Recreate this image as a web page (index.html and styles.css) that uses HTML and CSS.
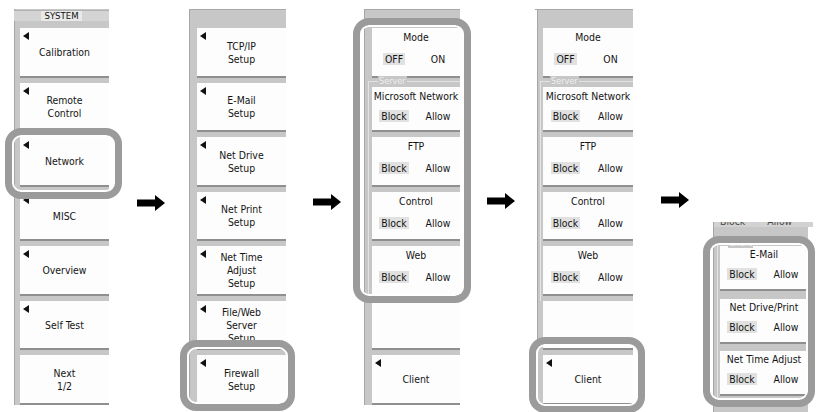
FILE: index.html
```html
<!DOCTYPE html>
<html>
<head>
<meta charset="utf-8">
<title>Network Firewall Menu</title>
<link rel="stylesheet" href="styles.css">
</head>
<body>
<div class="stage">

  <div class="panel p1">
    <div class="head-sys"><div class="sys-band"><span class="sys-label">SYSTEM</span></div></div>
    <div class="btn arrow">Calibration</div>
    <div class="btn arrow">Remote<br>Control</div>
    <div class="btn arrow">Network</div>
    <div class="btn arrow">MISC</div>
    <div class="btn arrow">Overview</div>
    <div class="btn arrow">Self Test</div>
    <div class="btn last">Next<br>1/2</div>
    <div class="ring r1"></div>
  </div>

  <svg class="flow a1" width="28" height="16" viewBox="0 0 28 16"><path d="M0 4.5H18V0L28 8L18 16V11.5H0Z" fill="#000"/></svg>

  <div class="panel p2">
    <div class="head"></div>
    <div class="btn arrow">TCP/IP<br>Setup</div>
    <div class="btn arrow">E-Mail<br>Setup</div>
    <div class="btn arrow">Net Drive<br>Setup</div>
    <div class="btn arrow">Net Print<br>Setup</div>
    <div class="btn arrow">Net Time<br>Adjust<br>Setup</div>
    <div class="btn arrow">File/Web<br>Server<br>Setup</div>
    <div class="btn arrow last">Firewall<br>Setup</div>
    <div class="ring r2"></div>
  </div>

  <svg class="flow a2" width="28" height="16" viewBox="0 0 28 16"><path d="M0 4.5H18V0L28 8L18 16V11.5H0Z" fill="#000"/></svg>

  <div class="panel p3">
    <div class="head"></div>
    <div class="box mode">
      <div class="title">Mode</div>
      <div class="opts"><span class="chip sel">OFF</span><span class="chip">ON</span></div>
    </div>
    <div class="grp">
      <span class="legend">Server</span>
      <div class="box first">
        <div class="title">Microsoft Network</div>
        <div class="opts"><span class="chip sel">Block</span><span class="chip">Allow</span></div>
      </div>
      <div class="box">
        <div class="title">FTP</div>
        <div class="opts"><span class="chip sel">Block</span><span class="chip">Allow</span></div>
      </div>
      <div class="box">
        <div class="title">Control</div>
        <div class="opts"><span class="chip sel">Block</span><span class="chip">Allow</span></div>
      </div>
      <div class="box">
        <div class="title">Web</div>
        <div class="opts"><span class="chip sel">Block</span><span class="chip">Allow</span></div>
      </div>
    </div>
    <div class="btn"></div>
    <div class="btn arrow last">Client</div>
    <div class="ring r3"></div>
  </div>

  <svg class="flow a3" width="28" height="16" viewBox="0 0 28 16"><path d="M0 4.5H18V0L28 8L18 16V11.5H0Z" fill="#000"/></svg>

  <div class="panel p4">
    <div class="head"></div>
    <div class="box mode">
      <div class="title">Mode</div>
      <div class="opts"><span class="chip sel">OFF</span><span class="chip">ON</span></div>
    </div>
    <div class="grp">
      <span class="legend">Server</span>
      <div class="box first">
        <div class="title">Microsoft Network</div>
        <div class="opts"><span class="chip sel">Block</span><span class="chip">Allow</span></div>
      </div>
      <div class="box">
        <div class="title">FTP</div>
        <div class="opts"><span class="chip sel">Block</span><span class="chip">Allow</span></div>
      </div>
      <div class="box">
        <div class="title">Control</div>
        <div class="opts"><span class="chip sel">Block</span><span class="chip">Allow</span></div>
      </div>
      <div class="box">
        <div class="title">Web</div>
        <div class="opts"><span class="chip sel">Block</span><span class="chip">Allow</span></div>
      </div>
    </div>
    <div class="btn"></div>
    <div class="btn arrow last">Client</div>
    <div class="ring r4"></div>
  </div>

  <svg class="flow a4" width="28" height="16" viewBox="0 0 28 16"><path d="M0 4.5H18V0L28 8L18 16V11.5H0Z" fill="#000"/></svg>

  <div class="panel p5">
    <div class="clip"><div class="clip-row"><span>Block</span><span>Allow</span></div></div>
    <div class="grp grp5">
      <span class="legend">Client</span>
      <div class="box small">
        <div class="title">E-Mail</div>
        <div class="opts"><span class="chip sel">Block</span><span class="chip">Allow</span></div>
      </div>
      <div class="box small">
        <div class="title">Net Drive/Print</div>
        <div class="opts"><span class="chip sel">Block</span><span class="chip">Allow</span></div>
      </div>
      <div class="box small">
        <div class="title">Net Time Adjust</div>
        <div class="opts"><span class="chip sel">Block</span><span class="chip">Allow</span></div>
      </div>
    </div>
    <div class="ring r5"></div>
  </div>

</div>
</body>
</html>
```

FILE: styles.css
```css
* { box-sizing: border-box; }
html, body { margin: 0; padding: 0; background: #fff; }
body {
  width: 816px;
  height: 412px;
  overflow: hidden;
  font-family: "DejaVu Sans Condensed", "DejaVu Sans", sans-serif;
  font-size: 10.4px;
  color: #141414;
}
.stage {
  display: flex;
  align-items: flex-start;
  height: 412px;
  overflow: hidden;
}

/* panels */
.panel {
  position: relative;
  flex: none;
  display: flex;
  flex-direction: column;
  background: #c7c7c7;
  border-left: 1px solid #a6a6a6;
}
.p1 { margin-left: 14px; margin-top: 9px; width: 95px; padding-left: 5px; }
.p2 { margin-left: 24px; margin-top: 9px; width: 97px; padding-left: 7px; }
.p3 { margin-left: 23px; margin-top: 9px; width: 96px; padding-left: 7px; }
.p4 { margin-left: 22px; margin-top: 9px; width: 96px; padding-left: 5px; }
.p5 { margin-left: 24px; margin-top: 222px; width: 95px; padding-left: 6px; padding-bottom: 30px; }

.head { height: 19px; border-top: 1px solid #a8a8a8; margin-left: -8px; }
.head-sys { height: 19px; margin-left: -6px; }
.sys-band {
  height: 11px;
  margin-top: 1px;
  background: #d4d4d4;
  border-top: 1px solid #b2b2b2;
  display: flex;
  justify-content: center;
}
.sys-label {
  background: #e9e9e9;
  padding: 0 3px;
  font-size: 9.5px;
  line-height: 10px;
  color: #111;
}

/* buttons */
.btn {
  position: relative;
  flex: none;
  height: 49.5px;
  margin-bottom: 5px;
  padding-top: 2px;
  background: #fdfdfd;
  border-bottom: 2px solid #8f8f8f;
  display: flex;
  align-items: center;
  justify-content: center;
  text-align: center;
  line-height: 13px;
}
.btn.last { margin-bottom: 0; }
.arrow::before {
  content: "";
  position: absolute;
  left: 3px;
  top: 4px;
  border-top: 4px solid transparent;
  border-bottom: 4px solid transparent;
  border-right: 6px solid #111;
}

/* option boxes */
.box {
  flex: none;
  height: 49.5px;
  margin-bottom: 5px;
  background: #fdfdfd;
  border-bottom: 2px solid #8f8f8f;
  display: flex;
  flex-direction: column;
}
.box.mode { margin-bottom: 3.5px; }
.box.first { height: 45px; }
.box.first .opts { margin-top: 7px; }
.title {
  text-align: center;
  line-height: 14px;
  padding-top: 2px;
  white-space: nowrap;
}
.opts {
  display: grid;
  grid-template-columns: 1fr 1fr;
  justify-items: center;
  margin-top: 9px;
}
.chip { line-height: 12px; padding: 0 2px; }
.chip.sel { background: #e1e1e1; }

.grp {
  position: relative;
  margin-left: -4px;
  padding-left: 3px;
  padding-top: 5px;
  border-top: 1px solid #e3e3e3;
  border-left: 1px solid #e3e3e3;
}
.p4 .grp { margin-left: -3px; padding-left: 2px; }
.legend {
  position: absolute;
  top: -6px;
  left: 9px;
  padding: 0 1px;
  font-size: 9px;
  line-height: 10px;
  color: #efefef;
  background: #c7c7c7;
}

/* column 5 */
.clip {
  height: 5px;
  overflow: hidden;
  background: #d2d2d2;
  margin-left: -6px;
  margin-right: -5px;
}
.clip-row {
  display: flex;
  gap: 22px;
  padding-left: 6px;
  margin-top: -7px;
  line-height: 12px;
  color: #4a4a4a;
}
.grp5 {
  margin-top: 17px;
  margin-left: -3px;
  padding-left: 2px;
  padding-top: 1px;
}
.grp5 .legend { top: -7px; left: 10px; }
.box.small { height: 45px; margin-bottom: 7.5px; }
.box.small .title { padding-top: 1px; }
.box.small .opts { margin-top: 7px; }

/* flow arrows */
.flow { flex: none; display: block; }
.a1 { margin-left: 28px; margin-top: 195px; }
.a2 { margin-left: 27px; margin-top: 194px; }
.a3 { margin-left: 27px; margin-top: 193px; }
.a4 { margin-left: 28px; margin-top: 192px; }

/* highlight rings */
.ring {
  position: absolute;
  z-index: 2;
  border: 7px solid #9b9b9b;
  border-radius: 16px;
  box-shadow: inset 0 0 0 2px #fff;
  pointer-events: none;
}
.r1 { left: -10px; top: 119px; width: 117px; height: 71px; }
.r2 { left: -10px; top: 331px; width: 115px; height: 71px; }
.r3 { left: -12px; top: 9px; width: 118px; height: 285px; }
.r4 { left: -9px; top: 328px; width: 116px; height: 76px; }
.r5 { left: -11px; top: 14px; width: 112px; height: 171px; }
```
